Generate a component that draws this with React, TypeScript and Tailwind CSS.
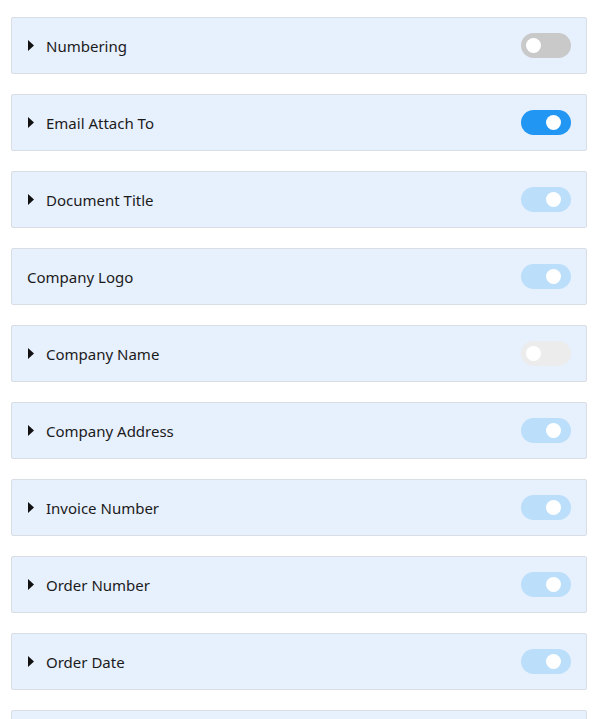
import React from "react";

type State = "off" | "on" | "onDisabled" | "offDisabled";

const rows: { label: string; caret: boolean; state: State }[] = [
  { label: "Numbering", caret: true, state: "off" },
  { label: "Email Attach To", caret: true, state: "on" },
  { label: "Document Title", caret: true, state: "onDisabled" },
  { label: "Company Logo", caret: false, state: "onDisabled" },
  { label: "Company Name", caret: true, state: "offDisabled" },
  { label: "Company Address", caret: true, state: "onDisabled" },
  { label: "Invoice Number", caret: true, state: "onDisabled" },
  { label: "Order Number", caret: true, state: "onDisabled" },
  { label: "Order Date", caret: true, state: "onDisabled" },
  { label: "Due Date", caret: true, state: "onDisabled" },
];

function Toggle({ state }: { state: State }) {
  const track =
    state === "off"
      ? "bg-[#c9c9c9]"
      : state === "on"
      ? "bg-[#2196f3]"
      : state === "onDisabled"
      ? "bg-[#bbdefb]"
      : "bg-[#ececec]";
  const right = state === "on" || state === "onDisabled";
  return (
    <div className={`w-[50px] h-[25px] rounded-full flex items-center ${track} ${right ? "pl-[25px]" : "pl-[5px]"}`}>
      <div className="w-[15px] h-[15px] rounded-full bg-white" />
    </div>
  );
}

export default function App() {
  return (
    <div
      className="bg-white w-[613px] h-[719px] overflow-hidden pt-[17px] pl-[11px] flex flex-col gap-[20px]"
      style={{ fontFamily: '"Noto Sans", "Open Sans", sans-serif' }}
    >
      {rows.map((r) => (
        <div
          key={r.label}
          className="w-[576px] h-[57px] shrink-0 bg-[#e7f0fd] border border-[#d9dde4] rounded-[2px] flex items-center pr-[15px]"
        >
          {r.caret ? (
            <div className="flex items-center pl-[16px] pt-[2px]">
              <svg width="6" height="11" viewBox="0 0 6 11" className="mr-[12px] -mt-[2px]">
                <path d="M0 0 L6 5.5 L0 11 Z" fill="#111" />
              </svg>
              <span className="text-[15px] text-[#1b1b1b]">{r.label}</span>
            </div>
          ) : (
            <span className="pl-[15px] pt-[2px] text-[15px] text-[#1b1b1b]">{r.label}</span>
          )}
          <div className="ml-auto">
            <Toggle state={r.state} />
          </div>
        </div>
      ))}
    </div>
  );
}
